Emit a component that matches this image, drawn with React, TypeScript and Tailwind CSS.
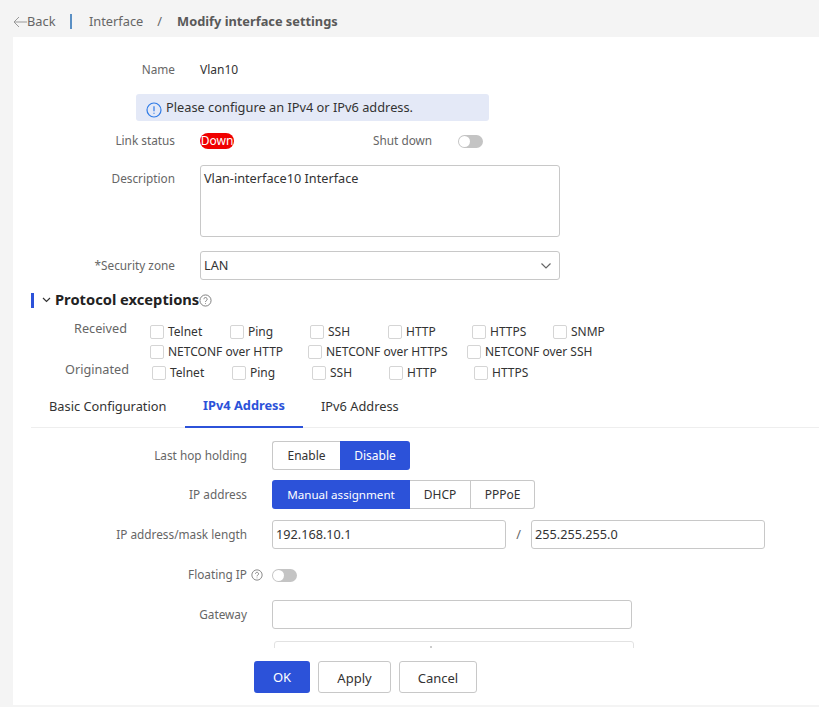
import React from "react";

const font = { fontFamily: '"Noto Sans", sans-serif' };
const label = "text-right text-[11.8px] text-[#666]";

function Check({ label, width }: { label: string; width: string }) {
  return (
    <div className={`flex items-center ${width}`}>
      <span className="h-[14px] w-[14px] shrink-0 rounded-[2px] border border-[#d5d5d5] bg-white" />
      <span className="ml-1 whitespace-nowrap text-[12px] text-[#333]">{label}</span>
    </div>
  );
}

function Toggle() {
  return (
    <span className="flex h-[13px] w-[25px] items-center rounded-full bg-[#c4c4c4] pl-[1px]">
      <span className="h-[11px] w-[11px] rounded-full bg-white" />
    </span>
  );
}

function Help({ size = 13 }: { size?: number }) {
  return (
    <svg width={size} height={size} viewBox="0 0 14 14" fill="none" stroke="#777" strokeWidth="1">
      <circle cx="7" cy="7" r="6" />
      <path d="M5.2 5.6a1.8 1.8 0 1 1 2.8 1.5c-.7.4-1 .8-1 1.5" />
      <path d="M7 10v.8" />
    </svg>
  );
}

const seg = "flex h-[29px] items-center justify-center";
const off = "border border-[#c8c8c8] text-[#333]";
const on = "bg-[#2c52d9] text-white";

export default function App() {
  return (
    <div style={font} className="flex h-[707px] w-[819px] flex-col overflow-hidden bg-[#f4f4f4] text-[12.7px] text-[#333]">
      <header className="flex h-[37px] shrink-0 items-center pl-[13px] pt-[6px] text-[12.8px]">
        <svg width="14" height="12" viewBox="0 0 14 12" fill="none" stroke="#999" strokeWidth="1">
          <path d="M14 6H1M6 1 1 6l5 5" />
        </svg>
        <span className="text-[#666]">Back</span>
        <span className="ml-[15px] h-[15px] w-[1.5px] bg-[#5a8fc4]" />
        <span className="ml-[17px] text-[#666]">Interface</span>
        <span className="ml-[14px] text-[#666]">/</span>
        <span className="ml-[15px] font-bold text-[#595959]">Modify interface settings</span>
      </header>

      <main className="ml-[13px] flex h-[668px] shrink-0 flex-col bg-white">
        <div className="h-[611px] shrink-0 overflow-hidden">
          <div className="flex h-[66px] items-center">
            <div className={`w-[162px] ${label}`}>Name</div>
            <div className="ml-[25px] text-[12px] text-[#333]">Vlan10</div>
          </div>
          <div className="ml-[123px] -mt-[9px] flex h-[27px] w-[353px] items-center rounded-[3px] bg-[#e4e9f7] pl-[10px] text-[12.8px]">
            <svg width="16" height="16" viewBox="0 0 16 16" fill="none" stroke="#2f7be6" strokeWidth="1.2" className="mt-[4px]">
              <circle cx="8" cy="8" r="7" />
              <path d="M8 4.2v5M8 10.8v1" />
            </svg>
            <span className="ml-[4px] text-[#333]">Please configure an IPv4 or IPv6 address.</span>
          </div>
          <div className="mt-[10px] flex h-[20px] items-center">
            <div className={`w-[162px] ${label}`}>Link status</div>
            <div className="ml-[25px] flex h-[16px] w-[34px] items-center justify-center rounded-full bg-[#f00000] text-[12px] text-white">Down</div>
            <div className={`ml-[139px] ${label}`}>Shut down</div>
            <div className="ml-[26px]"><Toggle /></div>
          </div>
          <div className="mt-[14px] flex">
            <div className={`w-[162px] pt-[5px] ${label}`}>Description</div>
            <div className="ml-[25px] h-[72px] w-[360px] rounded-[3px] border border-[#c8c8c8] px-[3px] pt-[3px] text-[#333]">Vlan-interface10 Interface</div>
          </div>
          <div className="mt-[14px] flex items-center">
            <div className={`w-[162px] ${label}`}>*Security zone</div>
            <div className="ml-[25px] flex h-[29px] w-[360px] items-center justify-between rounded-[3px] border border-[#c8c8c8] pl-[3px] pr-[7px] text-[#333]">
              <span>LAN</span>
              <svg width="12" height="8" viewBox="0 0 12 8" fill="none" stroke="#666" strokeWidth="1.2"><path d="M1.5 1.5 6 6l4.5-4.5" /></svg>
            </div>
          </div>

          <div className="mt-[12px] ml-[18px] flex h-[16px] items-center">
            <span className="h-[15px] w-[3px] bg-[#2c52d9]" />
            <svg width="9" height="6" viewBox="0 0 9 6" fill="none" stroke="#333" strokeWidth="1.2" className="ml-[8px]"><path d="M1 1l3.5 3.5L8 1" /></svg>
            <span className="ml-[4px] -mt-[1px] text-[14.7px] font-bold text-[#222]">Protocol exceptions</span>
            <Help size={13} />
          </div>

          <div className="mt-[12px] flex">
            <div className="w-[114px] text-right text-[12.7px] leading-[16px] text-[#666]">Received</div>
            <div className="ml-[23px] mt-[2px] flex flex-col">
              <div className="flex h-[20px] items-center">
                <Check label="Telnet" width="w-[80px]" />
                <Check label="Ping" width="w-[80px]" />
                <Check label="SSH" width="w-[78px]" />
                <Check label="HTTP" width="w-[84px]" />
                <Check label="HTTPS" width="w-[81px]" />
                <Check label="SNMP" width="w-[60px]" />
              </div>
              <div className="flex h-[20px] items-center">
                <Check label="NETCONF over HTTP" width="w-[158px]" />
                <Check label="NETCONF over HTTPS" width="w-[159px]" />
                <Check label="NETCONF over SSH" width="w-[130px]" />
              </div>
            </div>
          </div>
          <div className="flex items-start">
            <div className="w-[116px] text-right text-[12.7px] leading-[14px] text-[#666]">Originated</div>
            <div className="ml-[23px] mt-[1px] flex h-[20px] items-center">
              <Check label="Telnet" width="w-[80px]" />
              <Check label="Ping" width="w-[80px]" />
              <Check label="SSH" width="w-[77px]" />
              <Check label="HTTP" width="w-[85px]" />
              <Check label="HTTPS" width="w-[60px]" />
            </div>
          </div>

          <div className="mt-[2px] ml-[18px] flex h-[43px] border-b border-[#eeeeee] text-[12.8px]">
            <div className="flex h-[43px] w-[154px] items-center pl-[18px] text-[#333]">Basic Configuration</div>
            <div className="flex h-[43px] w-[118px] items-center justify-center border-b-2 border-[#2c52d9] font-bold text-[#2c52d9]">IPv4 Address</div>
            <div className="flex h-[43px] items-center pl-[18px] text-[#333]">IPv6 Address</div>
          </div>

          <div className="mt-[13px] flex h-[29px] items-center">
            <div className={`w-[234px] ${label}`}>Last hop holding</div>
            <div className="ml-[25px] flex text-[12px]">
              <div className={`${seg} ${off} w-[68px] rounded-l-[3px] border-r-0`}>Enable</div>
              <div className={`${seg} ${on} w-[70px] rounded-r-[3px]`}>Disable</div>
            </div>
          </div>
          <div className="mt-[10px] flex h-[29px] items-center">
            <div className={`w-[234px] ${label}`}>IP address</div>
            <div className="ml-[25px] flex text-[12px]">
              <div className={`${seg} ${on} w-[138px] rounded-l-[3px] text-[11.6px]`}>Manual assignment</div>
              <div className={`${seg} ${off} w-[61px] border-l-0`}>DHCP</div>
              <div className={`${seg} ${off} w-[64px] rounded-r-[3px] border-l-0`}>PPPoE</div>
            </div>
          </div>
          <div className="mt-[11px] flex h-[29px] items-center">
            <div className={`w-[234px] ${label}`}>IP address/mask length</div>
            <div className="ml-[25px] flex h-[29px] w-[234px] items-center rounded-[3px] border border-[#c8c8c8] pl-[3px] text-[#333]">192.168.10.1</div>
            <div className="w-[25px] text-center text-[#666]">/</div>
            <div className="flex h-[29px] w-[234px] items-center rounded-[3px] border border-[#c8c8c8] pl-[3px] text-[#333]">255.255.255.0</div>
          </div>
          <div className="mt-[18px] flex h-[16px] items-center">
            <div className={`w-[234px] ${label}`}>Floating IP</div>
            <div className="ml-[4px]"><Help size={12} /></div>
            <div className="ml-[9px]"><Toggle /></div>
          </div>
          <div className="mt-[17px] flex h-[29px] items-center">
            <div className={`w-[234px] ${label}`}>Gateway</div>
            <div className="ml-[25px] h-[29px] w-[360px] rounded-[3px] border border-[#c8c8c8]" />
          </div>
          <div className="ml-[261px] mt-[12px] h-[40px] w-[360px] rounded-[3px] border border-[#e2e2e2] pl-[155px] pt-[4px]">
            <div className="h-[2px] w-[2px] bg-[#cccccc]" />
          </div>
        </div>

        <div className="ml-[241px] mt-[13px] flex h-[32px] gap-[8px] text-[13px]">
          <div className="flex h-[32px] w-[56px] items-center justify-center rounded-[3px] bg-[#2c52d9] pt-[2px] text-white">OK</div>
          <div className="flex h-[32px] w-[73px] items-center justify-center rounded-[3px] border border-[#c8c8c8] pt-[3px] text-[#333]">Apply</div>
          <div className="flex h-[32px] w-[78px] items-center justify-center rounded-[3px] border border-[#c8c8c8] pt-[3px] text-[#333]">Cancel</div>
        </div>
      </main>
    </div>
  );
}
